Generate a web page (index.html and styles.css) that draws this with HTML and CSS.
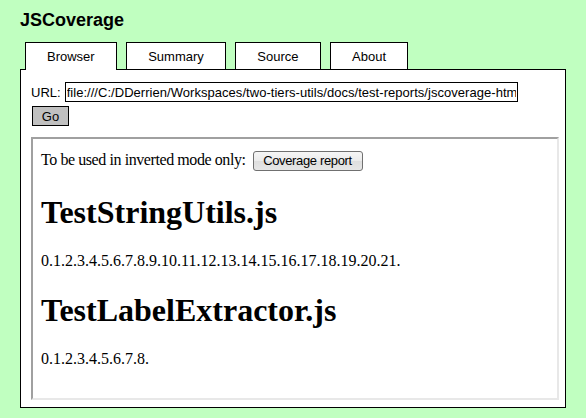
FILE: index.html
```html
<!DOCTYPE html>
<html>
<head>
<meta charset="utf-8">
<title>JSCoverage</title>
<link rel="stylesheet" href="styles.css">
</head>
<body>
<h1 class="title">JSCoverage</h1>
<div class="tabs">
  <div class="tab selected">Browser</div>
  <div class="tab">Summary</div>
  <div class="tab">Source</div>
  <div class="tab">About</div>
</div>
<div class="panel">
  <div class="url-row">
    <label class="url-label" for="location">URL:</label>
    <input class="url-input" id="location" type="text" value="file:///C:/DDerrien/Workspaces/two-tiers-utils/docs/test-reports/jscoverage-html/index.html">
  </div>
  <button class="go" type="button">Go</button>
  <div class="frame">
    <div class="mode"><span class="mode-text">To be used in inverted mode only:</span> <button class="report" type="button">Coverage report</button></div>
    <h1 class="file">TestStringUtils.js</h1>
    <p class="lines">0.1.2.3.4.5.6.7.8.9.10.11.12.13.14.15.16.17.18.19.20.21.</p>
    <h1 class="file">TestLabelExtractor.js</h1>
    <p class="lines">0.1.2.3.4.5.6.7.8.</p>
  </div>
</div>
</body>
</html>
```

FILE: styles.css
```css
html, body {
  margin: 0;
  padding: 0;
}
body {
  background: #c0ffc0;
  font-family: "Liberation Sans", Arial, sans-serif;
  color: #000;
  padding: 0 20px;
  height: 418px;
  box-sizing: border-box;
  overflow: hidden;
}
.title {
  margin: 0;
  padding-top: 10px;
  font-size: 18px;
  line-height: 21px;
  font-weight: bold;
}
.tabs {
  display: flex;
  align-items: flex-start;
  gap: 9.5px;
  margin-top: 11px;
  padding-left: 5px;
}
.tab {
  font-size: 13px;
  line-height: 15px;
  background: #fff;
  border: 1px solid #000;
  border-bottom: none;
  padding: 6px 21px 5px;
}
.tab.selected {
  position: relative;
  z-index: 1;
  padding-bottom: 6px;
  margin-bottom: -1px;
}
.panel {
  background: #fff;
  border: 1px solid #000;
  padding: 12px 6px 7px 10px;
}
.url-row {
  display: flex;
  align-items: center;
  height: 20px;
  font-size: 13px;
}
.url-label {
  line-height: 15px;
}
.url-input {
  margin: 0 0 0 4px;
  box-sizing: border-box;
  width: 453px;
  height: 20px;
  border: 1px solid #000;
  padding: 0 1px;
  font-family: "Liberation Sans", Arial, sans-serif;
  font-size: 13px;
  letter-spacing: 0.04px;
  color: #000;
  background: #fff;
  outline: none;
}
.go {
  display: block;
  margin: 4px 0 0 1px;
  box-sizing: border-box;
  width: 37px;
  height: 20px;
  padding: 0;
  border: 1px solid #000;
  background: #c0c0c0;
  font-family: "Liberation Sans", Arial, sans-serif;
  font-size: 13px;
  color: #000;
}
.frame {
  margin-top: 11px;
  box-sizing: border-box;
  height: 263px;
  border: 2px solid #a0a0a0;
  border-right-color: #e8e8e8;
  border-bottom-color: #e8e8e8;
  padding: 8px;
  overflow: hidden;
  font-family: "Liberation Serif", "Times New Roman", serif;
  font-size: 16px;
}
.mode {
  padding-top: 3px;
  padding-bottom: 2px;
  line-height: 20px;
}
.mode-text {
  letter-spacing: -0.42px;
}
.report {
  box-sizing: border-box;
  width: 110px;
  height: 20px;
  margin: 0 0 0 3px;
  padding: 0;
  border: 1px solid #707070;
  border-radius: 3px;
  background: linear-gradient(#f6f6f6, #ebebeb 50%, #dedede 50%, #e6e6e6);
  font-family: "Liberation Sans", Arial, sans-serif;
  font-size: 13px;
  letter-spacing: -0.35px;
  color: #000;
  vertical-align: baseline;
}
.file {
  font-size: 32px;
  font-weight: bold;
  margin: 21.44px 0;
}
.lines {
  margin: 16px 0;
}
```
